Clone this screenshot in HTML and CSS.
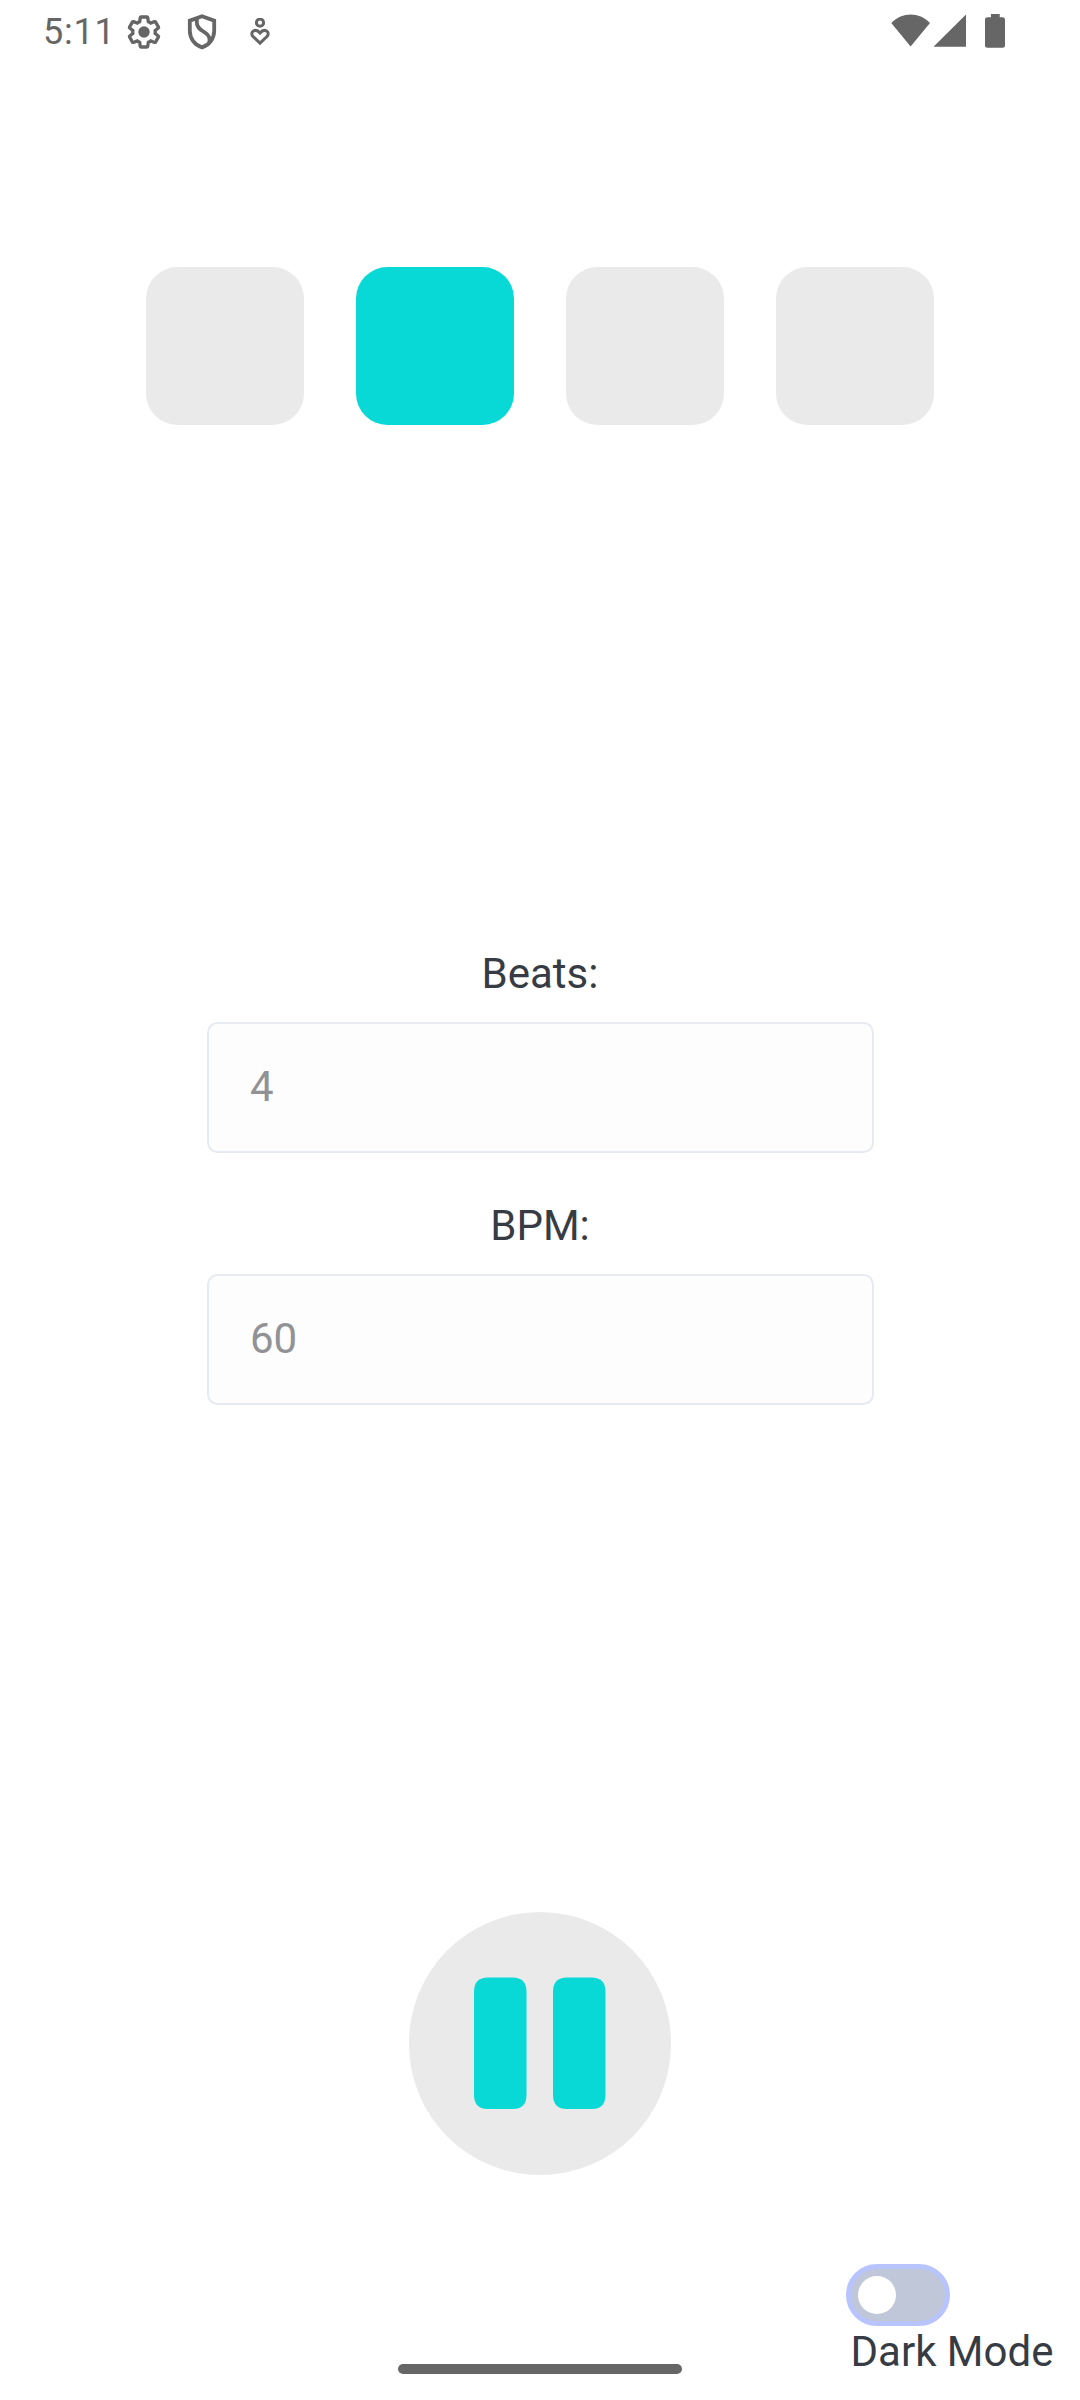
FILE: index.html
```html
<!DOCTYPE html>
<html lang="en">
<head>
<meta charset="utf-8">
<title>Metronome</title>
<link rel="stylesheet" href="styles.css">
</head>
<body>
<div class="screen">
  <header class="status">
    <span class="clock">5:11</span>
    <svg class="gear" viewBox="0 0 24 24"><path d="M19.43 12.98c.04-.32.07-.64.07-.98 0-.34-.03-.66-.07-.98l2.11-1.65c.19-.15.24-.42.12-.64l-2-3.46c-.09-.16-.26-.25-.44-.25-.06 0-.12.01-.17.03l-2.49 1c-.52-.4-1.08-.73-1.69-.98l-.38-2.65C14.46 2.18 14.25 2 14 2h-4c-.25 0-.46.18-.49.42l-.38 2.65c-.61.25-1.17.59-1.69.98l-2.49-1c-.06-.02-.12-.03-.18-.03-.17 0-.34.09-.43.25l-2 3.46c-.13.22-.07.49.12.64l2.11 1.65c-.04.32-.07.65-.07.98 0 .33.03.66.07.98l-2.11 1.65c-.19.15-.24.42-.12.64l2 3.46c.09.16.26.25.44.25.06 0 .12-.01.17-.03l2.49-1c.52.4 1.08.73 1.69.98l.38 2.65c.03.24.24.42.49.42h4c.25 0 .46-.18.49-.42l.38-2.65c.61-.25 1.17-.59 1.69-.98l2.49 1c.06.02.12.03.18.03.17 0 .34-.09.43-.25l2-3.46c.12-.22.07-.49-.12-.64l-2.11-1.65z"/><circle cx="12" cy="12" r="3.8"/></svg>
    <svg class="shield" viewBox="0 0 30 36"><path d="M15 2.3 27.2 6.7V16.5C27.2 24.5 22.3 31 15 33.4 7.700 31 2.800 24.500 2.800 16.500V6.700Z"/><path d="M9.800 4.500V8.500C9.800 18 22.500 17 22.500 25V28.500"/></svg>
    <svg class="wellbeing" viewBox="0 0 20 28"><circle cx="10" cy="4.700" r="3.600"/><path d="M10 25.200 2.800 18.300C-.6 14 5.500 9.600 10 15 14.500 9.600 20.600 14 17.200 18.300Z"/></svg>
    <span class="spacer"></span>
    <svg class="signals" viewBox="0 0 114 36"><path d="M.3 9C11.500-2.300 27.700-2.300 39 9L19.600 32.500Z"/><path d="M75 .5V32.700H42.500Z"/><path d="M100 0h8.700v3.200h2.800a2.500 2.500 0 0 1 2.500 2.500v25.600a2.500 2.500 0 0 1-2.500 2.500H96.500a2.500 2.500 0 0 1-2.500-2.500V5.700a2.500 2.500 0 0 1 2.500-2.500h3.500Z"/></svg>
  </header>
  <main class="metronome">
    <div class="beats">
      <div class="beat"></div>
      <div class="beat active"></div>
      <div class="beat"></div>
      <div class="beat"></div>
    </div>
    <div class="form">
      <label class="label" for="beats">Beats:</label>
      <input class="field" id="beats" placeholder="4">
      <label class="label second" for="bpm">BPM:</label>
      <input class="field" id="bpm" placeholder="60">
    </div>
    <button class="pause" aria-label="Pause">
      <svg class="bars" viewBox="0 0 132 132"><path id="bar" d="M14 .5H38.500Q52.500 .5 52.500 14.500V118Q52.500 132 38.500 132H14Q0 132 0 118V14.500Q0 .5 14 .5Z"/><use href="#bar" x="79"/></svg>
    </button>
  </main>
  <footer class="theme">
    <div class="toggle"><span class="knob"></span></div>
    <span class="theme-label">Dark Mode</span>
  </footer>
  <div class="home"></div>
</div>
</body>
</html>
```

FILE: styles.css
```css
* { box-sizing: border-box; }

body {
  margin: 0;
  background: #fff;
  color: #373c44;
  font: 42px/49px Roboto, sans-serif;
}

.screen {
  position: relative;
  display: flex;
  flex-direction: column;
  width: 1080px;
  height: 2400px;
  overflow: hidden;
}

.status {
  display: flex;
  align-items: flex-start;
  height: 64px;
  padding: 0 75px 0 43px;
  color: #666;
}

.status svg { flex: none; fill: none; stroke: #666; }
.clock { width: 83px; margin-top: 11px; font-size: 36px; line-height: 42px; letter-spacing: 0.8px; }
.status .gear { width: 36px; height: 36px; margin-top: 13.500px; stroke-width: 2.200; }
.gear circle { fill: #666; stroke: none; }
.status .shield { width: 30px; height: 36px; margin: 14px 0 0 25px; stroke-width: 3.800; }
.status .wellbeing { width: 20px; height: 28px; margin: 18px 0 0 33px; stroke-width: 3; }
.spacer { flex: 1; }
.status .signals { width: 114px; height: 36px; margin-top: 14px; fill: #666; stroke: none; }

.metronome {
  display: flex;
  flex-direction: column;
  align-items: center;
  padding-top: 203px;
}

.beats { display: flex; gap: 52px; }
.beat { width: 158px; height: 158px; border-radius: 31.500px; background: #eaeaea; }
.beat.active { background: #08d9d6; }

.form {
  display: flex;
  flex-direction: column;
  align-items: center;
  width: 667px;
  margin: 524px 0 0 1px;
}

.label { margin: 0 1px 24px 0; }
.label.second { margin-top: 48px; }

.field {
  width: 100%;
  height: 131px;
  padding: 0 41px 2px;
  border: 2px solid #e7eaf0;
  border-radius: 10.500px;
  background: #fdfdfd;
  color: #373c44;
  font: inherit;
}
.field::placeholder { color: #919295; opacity: 1; }

.pause {
  display: flex;
  align-items: center;
  justify-content: center;
  width: 262.500px;
  height: 262.500px;
  margin-top: 507px;
  padding: 0;
  border: 0;
  border-radius: 50%;
  background: #eaeaea;
}
.bars { width: 132px; height: 132px; fill: #08d9d6; }

.theme {
  display: flex;
  flex-direction: column;
  align-items: flex-start;
  margin: 89px 0 0 846px;
}

.toggle {
  display: flex;
  align-items: center;
  width: 104px;
  height: 62.500px;
  padding-left: 7px;
  border: 5px solid #b8c4ff;
  border-radius: 32px;
  background: #bfc7d9;
}
.knob { width: 38px; height: 38px; border-radius: 50%; background: #fff; }
.theme-label { margin: 1px 0 0 4.500px; white-space: nowrap; }

.home {
  position: absolute;
  bottom: 26px;
  left: 398px;
  width: 284px;
  height: 10px;
  border-radius: 5px;
  background: #666;
}
```
